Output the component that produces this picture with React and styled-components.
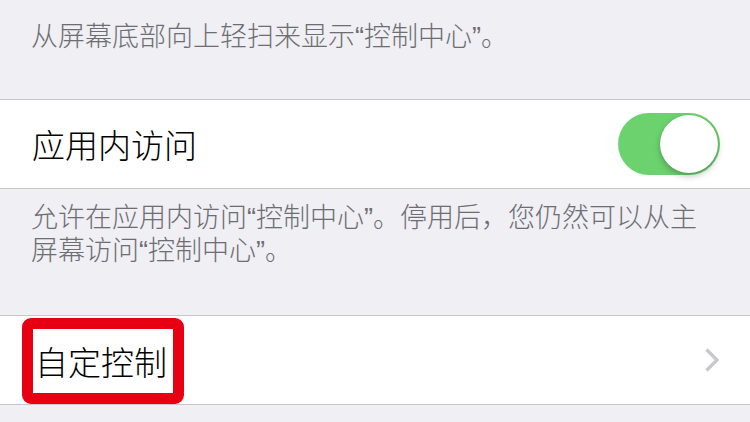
import styled, { createGlobalStyle } from "styled-components";

const GlobalStyle = createGlobalStyle`
  html, body {
    margin: 0;
    padding: 0;
    background: #efeff4;
    overflow: hidden;
  }
  body {
    font-family: "Liberation Sans", "Noto Sans CJK SC", sans-serif;
    font-weight: 300;
  }
`;

const Page = styled.div`
  width: 750px;
  height: 422px;
  background: #efeff4;
`;

const Footer = styled.div`
  color: #6d6d72;
  font-size: 27px;
  line-height: 33px;
  padding: ${(p) => p.pad || "0 30px 0 31px"};
  height: ${(p) => p.h}px;
  box-sizing: border-box;
`;

const Group = styled.div`
  background: #fff;
  border-top: 1px solid #c8c7cc;
  border-bottom: 1px solid #c8c7cc;
`;

const Cell = styled.div`
  height: 88px;
  display: flex;
  align-items: center;
  justify-content: space-between;
  padding: 0 30px 0 ${(p) => p.left || 32}px;
  font-size: 33px;
  color: #000;
`;

const Label = styled.span`
  display: flex;
  align-items: center;
`;

const Marked = styled.span`
  display: flex;
  align-items: center;
  box-sizing: border-box;
  height: 86px;
  margin-top: 1px;
  padding: 0 6px 0 2px;
  border: 11px solid #e60012;
  border-radius: 9px;
`;

const Switch = styled.div`
  width: 102px;
  height: 62px;
  border-radius: 31px;
  background: #6bd26e;
  display: flex;
  align-items: center;
  justify-content: flex-end;
  padding: 2px;
  box-sizing: border-box;
`;

const Knob = styled.div`
  width: 58px;
  height: 58px;
  border-radius: 50%;
  background: #fff;
  box-shadow: 0 3px 6px rgba(0, 0, 0, 0.25), 0 0 1px rgba(0, 0, 0, 0.2);
`;

const Chevron = () => (
  <svg width="16" height="26" viewBox="0 0 16 26">
    <path d="M2.5 2.5 L13 13 L2.5 23.5" fill="none" stroke="#c7c7cc" strokeWidth="3.2" />
  </svg>
);

const App = () => {
  return (
    <Page>
      <GlobalStyle />
      <Footer h={99} pad="21px 30px 0 31px">从屏幕底部向上轻扫来显示“控制中心”。</Footer>
      <Group>
        <Cell>
          <Label>应用内访问</Label>
          <Switch>
            <Knob />
          </Switch>
        </Cell>
      </Group>
      <Footer h={126} pad="13px 30px 0 31px">
        允许在应用内访问“控制中心”。停用后，您仍然可以从主屏幕访问“控制中心”。
      </Footer>
      <Group>
        <Cell left={22}>
          <Marked>自定控制</Marked>
          <Chevron />
        </Cell>
      </Group>
    </Page>
  );
};

export default App;
